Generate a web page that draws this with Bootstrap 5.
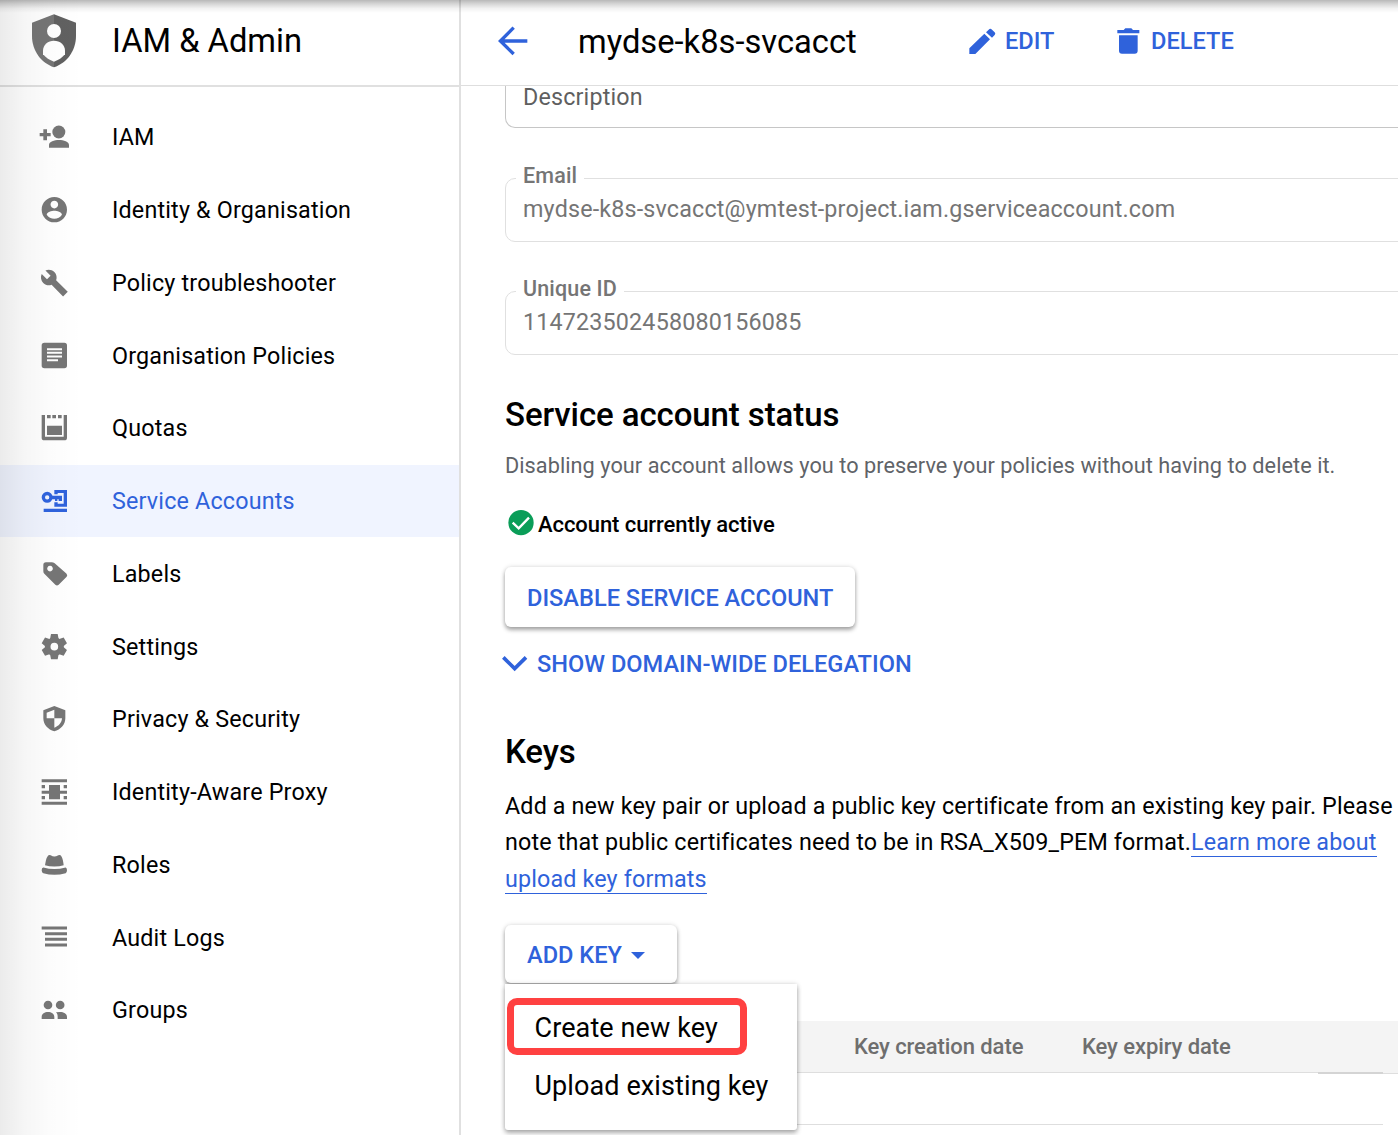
<!DOCTYPE html>
<html lang="en">
<head>
<meta charset="utf-8">
<meta name="viewport" content="width=device-width, initial-scale=1">
<title>IAM &amp; Admin – Service account</title>
<link href="https://cdn.jsdelivr.net/npm/bootstrap@5.3.0/dist/css/bootstrap.min.css" rel="stylesheet">
<style>
:root { --blue: #2f62db; --grey: #757575; }
body { font-family: Roboto, "Open Sans", sans-serif; color: #000; background: #fff; width: 1398px; height: 1135px; overflow: hidden; position: relative; }
/* shadow thrown by the global bar above */
body::before { content: ""; position: absolute; left: 0; top: 0; width: 100%; height: 13px; z-index: 20; background: linear-gradient(rgba(0,0,0,.28), rgba(0,0,0,.17) 28%, rgba(0,0,0,.05) 65%, transparent); pointer-events: none; }
.shell { height: 1135px; }
.side { width: 461px; border-right: 2px solid #e0e0e0; position: relative; }
.side::before { content: ""; position: absolute; left: 0; top: 0; bottom: 0; width: 84px; background: linear-gradient(90deg, rgba(0,0,0,.078), rgba(0,0,0,.035) 30%, rgba(0,0,0,.012) 60%, transparent); pointer-events: none; }
.side-head { height: 87px; border-bottom: 2px solid #e0e0e0; padding: 0 0 3px 31px; }
.side-head svg { margin-right: 35px; width: 46px; height: 56px; }
.ttl { font-size: 32.7px; line-height: 40px; }
.side-nav { padding-top: 13.9px; }
.side-nav .nav-link { height: 72.75px; padding: 0 0 0 37px; font-size: 23.3px; letter-spacing: .19px; color: #000; line-height: 30px; }
.side-nav .nav-link.active { background: #f0f4ff; color: var(--blue); }
.side-nav svg { width: 34px; height: 34px; margin-right: 41px; fill: var(--grey); position: relative; z-index: 1; }
.side-nav .active svg { fill: var(--blue); }
.main-col { width: 937px; }
.top-bar { height: 86px; border-bottom: 1px solid #dedede; padding: 0 0 3px 37px; }
.act { color: var(--blue); font-weight: 500; font-size: 23.6px; line-height: 30px; }
.act:hover { color: var(--blue); }
.act-edit { width: 148px; }
.act-edit svg { margin-right: 9px; }
.act-del svg { margin-right: 11px; }
.act-show { margin: 22px 0 53px -3px; }
.act-show svg { margin: -2px 9px 0 0; }
.hd-name { margin-left: 49px; width: 391px; padding-top: 2px; }
.pane { padding-left: 44px; }
.fld { width: 910px; border: 1px solid #e0e0e0; border-radius: 10px; height: 64px; padding: 15px 17px 0; font-size: 23.3px; letter-spacing: .17px; line-height: 30px; color: #757575; position: relative; }
.fld-open { height: 42px; border-color: #c6c6c6; border-top: 0; border-radius: 0 0 10px 10px; padding-top: 0; line-height: 22px; color: #5f5f5f; margin-bottom: 50px; }
.fld-mail { margin-bottom: 49px; }
.fld label { position: absolute; left: 10px; top: -18px; background: #fff; padding: 0 7px; font-weight: 500; font-size: 21.5px; line-height: 30px; letter-spacing: .15px; }
.sec { font-size: 33px; font-weight: 500; line-height: 40px; margin: 0; letter-spacing: -.1px; }
.sec-status { margin-top: 40px; }
.hint { font-size: 21.7px; line-height: 30px; color: #5f6368; margin: 16px 0 27px; letter-spacing: .05px; white-space: nowrap; }
.state { font-size: 22px; font-weight: 500; line-height: 30px; letter-spacing: -.07px; padding-left: 3px; }
.state span { padding-top: 2px; margin-bottom: -2px; }
.btn-lift { --bs-btn-color: var(--blue); --bs-btn-bg: #fff; --bs-btn-hover-bg: #fff; --bs-btn-hover-color: var(--blue); border: 0; border-radius: 6px; box-shadow: 0 3px 4px rgba(0,0,0,.32), 0 0 5px rgba(0,0,0,.14); font-weight: 500; font-size: 23.6px; line-height: 30px; padding: 2px 22px 0; white-space: nowrap; }
.btn-dis { width: 350px; height: 60px; margin-top: 29px; }
.btn-add { width: 172px; height: 58px; }
.btn-add::after { border-top: 7px solid; border-left: 7px solid transparent; border-right: 7px solid transparent; margin-left: 9px; vertical-align: 4px; }
.keys-txt { font-size: 23.3px; line-height: 36.5px; letter-spacing: .15px; margin: 15.5px 0 27.5px; white-space: nowrap; }
.keys-txt a { color: var(--blue); text-decoration: none; border-bottom: 1px solid var(--blue); }
.add-wrap { height: 96px; }
.add-menu { width: 292px; height: 146px; border: 0; border-radius: 0 0 3px 3px; padding: 14px 2px; box-shadow: 0 3px 5px rgba(0,0,0,.3), 0 0 5px rgba(0,0,0,.15); top: 59px; left: 0; color: #000; }
.add-menu .dropdown-item { font-size: 27px; line-height: 40px; padding: 10px 27.5px 8px; color: #000; letter-spacing: .1px; }
.add-menu .dropdown-item.picked { width: 240px; height: 57px; border: 7px solid #ff4141; border-radius: 10px; padding: 3px 20.5px 0; margin-bottom: 1px; }
.tbl { width: 893px; }
.tbl-h { background: #f4f4f4; height: 52px; border-bottom: 1px solid #dedede; font-size: 22px; font-weight: 500; line-height: 51px; color: #6e6e6e; letter-spacing: -.08px; white-space: nowrap; }
.h-made { width: 577px; padding-left: 349px; }
.h-exp { width: 236px; }
.h-act { width: 65px; height: 53px; border-bottom: 2px solid #d4d4d4; }
.h-end { width: 15px; height: 53px; }
.tbl-r { width: 878px; height: 52px; margin-top: -1px; border-bottom: 1px solid #dedede; }
</style>
</head>
<body>
<div class="shell d-flex">
  <aside class="side flex-shrink-0">
    <div class="side-head d-flex align-items-center">
      <svg viewBox="93 38 138 168"><path fill="#757575" d="M162 42 96 67v40c0 45 28 81 66 94z"/><path fill="#616161" d="m162 42 66 25v40c0 45-28 81-66 94z"/><circle cx="162" cy="92" r="21" fill="#fff"/><path fill="#fff" d="M129 151c0-18 15-30 33-30s33 12 33 30v11c-8 10-20 18-33 22-13-4-25-12-33-22z"/></svg>
      <span class="ttl">IAM &amp; Admin</span>
    </div>
    <nav class="side-nav nav flex-column flex-nowrap">
      <a class="nav-link d-flex align-items-center" href="#"><svg viewBox="111 362 102 102"><circle cx="176.500" cy="398" r="19.500"/><path d="M147 445v-8c0-10 16-15 30-15s30 5 30 15v8zM119 401h11v-11h11v11h11v10h-11v12h-11v-12h-11z"/></svg>IAM</a>
      <a class="nav-link d-flex align-items-center" href="#"><svg viewBox="111 580 102 102"><path fill-rule="evenodd" transform="translate(117.400 584.400) scale(3.800)" d="M12 2C6.480 2 2 6.480 2 12s4.480 10 10 10 10-4.480 10-10S17.520 2 12 2zm0 3c1.660 0 3 1.340 3 3s-1.340 3-3 3-3-1.340-3-3 1.340-3 3-3zm0 14.200c-2.500 0-4.710-1.280-6-3.220.030-1.990 4-3.080 6-3.080s5.970 1.090 6 3.080c-1.290 1.940-3.500 3.220-6 3.220z"/></svg>Identity &amp; Organisation</a>
      <a class="nav-link d-flex align-items-center" href="#"><svg viewBox="111 78.400 102 102"><path transform="translate(119.400 85.700) scale(3.600)" d="m23.300 19.500-9.700-9.600c.9-2.300.4-5-1.500-6.900-2-2-5-2.400-7.400-1.300L9 6 6 9 1.600 4.700C.4 7.100.9 10.100 2.900 12.100c1.900 1.900 4.600 2.400 6.900 1.500l9.600 9.700z"/></svg>Policy troubleshooter</a>
      <a class="nav-link d-flex align-items-center" href="#"><svg viewBox="111 296.600 102 102"><path fill-rule="evenodd" d="M133 308h60q8 0 8 8v60q0 8-8 8h-60q-8 0-8-8v-60q0-8 8-8zm8 16v6h45v-6zm0 11v6h45v-6zm0 11v6h45v-6zm0 11v6h33v-6z"/></svg>Organisation Policies</a>
      <a class="nav-link d-flex align-items-center" href="#"><svg viewBox="111 514.900 102 102"><path d="M125 527h10v65h56v-65h10v68q0 8-8 8h-60q-8 0-8-8zM141 527h11v10h-11zM157 527h11v10h-11zM174 527h11v10h-11zM141 559h45v28h-45z"/></svg>Quotas</a>
      <a class="nav-link active d-flex align-items-center" href="#"><svg viewBox="111 733.100 102 102"><circle cx="141.500" cy="773" r="11.500" fill="none" stroke="#2f62db" stroke-width="10"/><path d="M155 768h31v16h-10v-5h-4v5h-7v-5h-10zM163 751h38v50h-38v-13h10v4h18v-32h-18v4h-10zM131 807h70v10h-70z"/></svg>Service Accounts</a>
      <a class="nav-link d-flex align-items-center" href="#"><svg viewBox="111 51.400 102 102"><path fill-rule="evenodd" d="M138 67h17q5 0 9 3l35 31q5 5 1 10l-24 24q-5 4-10 0l-33-33q-3-3-3-8V75q0-8 8-8zm12 11a8.500 8.500 0 1 0 .1 0z"/></svg>Labels</a>
      <a class="nav-link d-flex align-items-center" href="#"><svg viewBox="-52 -49.900 102 102"><g id="tooth"><path d="m-10-38h20l3 16h-26zM-10 38h20l3-16h-26z"/></g><use href="#tooth" transform="rotate(60)"/><use href="#tooth" transform="rotate(120)"/><circle r="20" fill="none" stroke="#757575" stroke-width="17"/></svg>Settings</a>
      <a class="nav-link d-flex align-items-center" href="#"><svg viewBox="111 487.900 102 102"><path fill-rule="evenodd" d="m163 500 33 13v24c0 19-14 34-33 39-19-5-33-20-33-39v-24zm0 11-23 9v17h23zm0 26v28c13-5 22-14 23-28z"/></svg>Privacy &amp; Security</a>
      <a class="nav-link d-flex align-items-center" href="#"><svg viewBox="111 46.100 102 102"><path d="M125 59h76v9h-76zM125 126h76v9h-76zM125 93h76v9h-76zM147 76h33v43h-33zM125 76h10v10h-10zM191 76h10v10h-10zM125 109h10v10h-10zM191 109h10v10h-10z"/></svg>Identity-Aware Proxy</a>
      <a class="nav-link d-flex align-items-center" href="#"><svg viewBox="111 264.400 102 102"><path d="M135 316c2-10 3-21 8-27q3-5 9-3 6 4 11 4t12-4q6-2 9 3c4 6 6 17 7 27q-12 4-28 4t-28-4zM130 323q33 9 67 0 4 2 4 8t-4 9q-34 9-67 0-5-2-5-9t5-8z"/></svg>Roles</a>
      <a class="nav-link d-flex align-items-center" href="#"><svg viewBox="111 482.600 102 102"><path d="M125 499h76v9h-76zM135 516h66v9h-66zM135 533h66v9h-66zM135 550h66v9h-66z"/></svg>Audit Logs</a>
      <a class="nav-link d-flex align-items-center" href="#"><svg viewBox="111 700.900 102 102"><circle cx="144" cy="737" r="13"/><circle cx="180.500" cy="737" r="13"/><path d="M125 779v-6c0-10 9-15 19-15s19 5 19 15v6zM168 759q6-1 12-1c11 0 21 5 21 15v6h-28v-6c0-6-1-10-5-14z"/></svg>Groups</a>
    </nav>
  </aside>
  <main class="main-col">
    <header class="top-bar d-flex align-items-center">
      <svg width="31" height="30" viewBox="174 78 93 90" class="flex-shrink-0"><path d="M262 123h-80m39-40-40 40 40 39" fill="none" stroke="#2f62db" stroke-width="10"/></svg>
      <span class="ttl hd-name">mydse-k8s-svcacct</span>
      <a class="act act-edit d-flex align-items-center text-decoration-none" href="#"><svg width="27" height="26" viewBox="267 84 81 78" fill="#2f62db"><path d="M268 162v-17l45-44 17 17-44 44zM318 97l8-8q5-5 10 0l8 8q4 4 0 8l-8 8z"/></svg><span>EDIT</span></a>
      <a class="act act-del d-flex align-items-center text-decoration-none" href="#"><svg width="23" height="26" viewBox="711 85 69 78" fill="#2f62db"><path d="M712 91h19l5-5h18l5 5h19v10h-66zM717 107h56v46q0 9-9 9h-38q-9 0-9-9z"/></svg><span>DELETE</span></a>
    </header>
    <div class="pane">
      <div class="fld fld-open">Description</div>
      <div class="fld fld-mail"><label>Email</label>mydse-k8s-svcacct@ymtest-project.iam.gserviceaccount.com</div>
      <div class="fld"><label>Unique ID</label>114723502458080156085</div>
      <h2 class="sec sec-status">Service account status</h2>
      <p class="hint">Disabling your account allows you to preserve your policies without having to delete it.</p>
      <div class="state d-flex align-items-center"><svg width="26" height="26" viewBox="0 0 78 78" class="me-1"><circle cx="39" cy="38" r="38" fill="#0a9d58"/><path d="m14 38 18 17 31-32" fill="none" stroke="#fff" stroke-width="7"/></svg><span>Account currently active</span></div>
      <button class="btn btn-lift btn-dis d-block" type="button">DISABLE SERVICE ACCOUNT</button>
      <a class="act act-show d-flex align-items-center text-decoration-none" href="#"><svg width="26" height="17" viewBox="35 494 78 51"><path d="m39 501 34 34 34-34" fill="none" stroke="#2f62db" stroke-width="11"/></svg><span>SHOW DOMAIN-WIDE DELEGATION</span></a>
      <h2 class="sec sec-keys">Keys</h2>
      <p class="keys-txt">Add a new key pair or upload a public key certificate from an existing key pair. Please<br>note that public certificates need to be in RSA_X509_PEM format.<a href="#">Learn more about</a><br><a href="#">upload key formats</a></p>
      <div class="dropdown add-wrap">
        <button class="btn btn-lift btn-add dropdown-toggle text-start" type="button">ADD KEY</button>
        <div class="dropdown-menu add-menu show">
          <a class="dropdown-item picked" href="#">Create new key</a>
          <a class="dropdown-item" href="#">Upload existing key</a>
        </div>
      </div>
      <div class="tbl">
        <div class="d-flex align-items-start">
          <div class="tbl-h h-made">Key creation date</div>
          <div class="tbl-h h-exp">Key expiry date</div>
          <div class="tbl-h h-act"></div>
          <div class="tbl-h h-end"></div>
        </div>
        <div class="tbl-r"></div>
      </div>
    </div>
  </main>
</div>
<script src="https://cdn.jsdelivr.net/npm/bootstrap@5.3.0/dist/js/bootstrap.bundle.min.js"></script>
</body>
</html>
